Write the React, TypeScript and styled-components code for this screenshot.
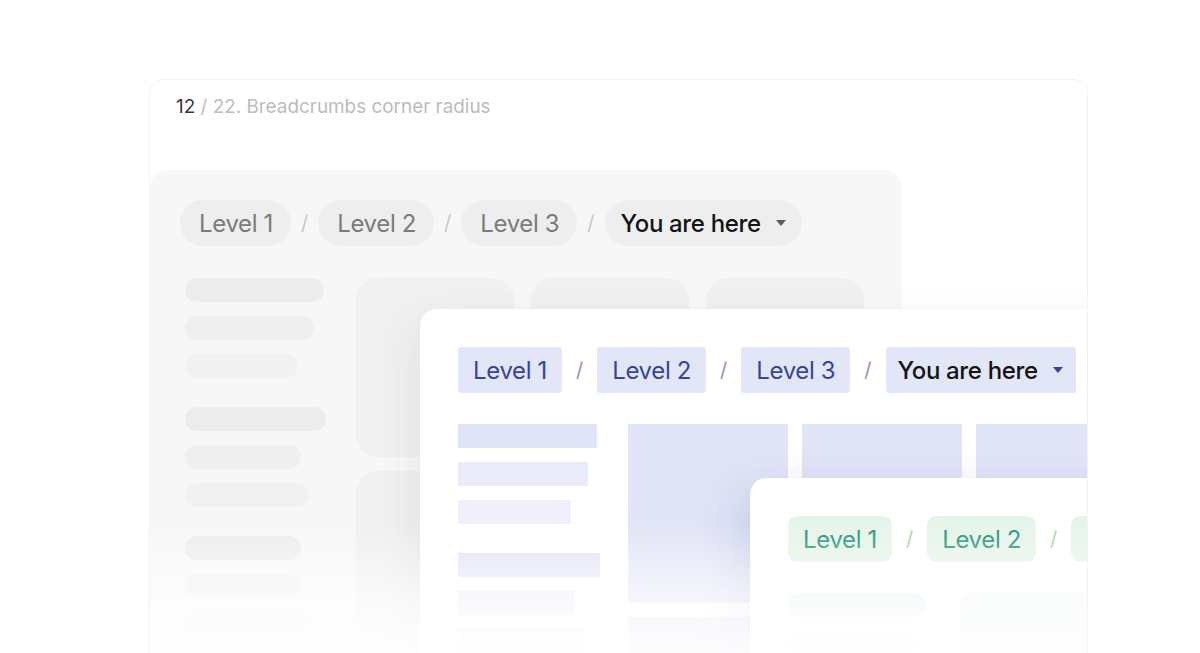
import React from "react";
import styled, { createGlobalStyle } from "styled-components";

type Tone = "grey" | "blue" | "green";

interface ToneStyle {
  crumbBg: string;
  crumbText: string;
  slash: string;
  current: string;
  caret: string;
  crumbRadius: number;
  crumbPad: number;
  slashGap: number;
  bars: string[];
  barRadius: number;
  block: string;
  blockRadius: number;
  blockW: number;
  colGap: number;
}

const tones: Record<Tone, ToneStyle> = {
  grey: {
    crumbBg: "#eeeeee",
    crumbText: "#7b7b7b",
    slash: "#c6c6c6",
    current: "#141414",
    caret: "#5e5e5e",
    crumbRadius: 23,
    crumbPad: 18,
    slashGap: 10,
    bars: ["#ececec", "#efefef", "#f1f1f1"],
    barRadius: 12,
    block: "#f0f0f0",
    blockRadius: 22,
    blockW: 158,
    colGap: 30,
  },
  blue: {
    crumbBg: "#e3e6f7",
    crumbText: "#36449a",
    slash: "#8a93cc",
    current: "#141414",
    caret: "#36449a",
    crumbRadius: 3,
    crumbPad: 15,
    slashGap: 14,
    bars: ["#e1e4f6", "#e9ebf9", "#eff0fb"],
    barRadius: 0,
    block: "#e2e5f7",
    blockRadius: 0,
    blockW: 160,
    colGap: 29,
  },
  green: {
    crumbBg: "#e5f4e9",
    crumbText: "#23937a",
    slash: "#9dd4a6",
    current: "#141414",
    caret: "#23937a",
    crumbRadius: 9,
    crumbPad: 15,
    slashGap: 14,
    bars: ["#e8f5eb", "#eef8f0", "#f2faf4"],
    barRadius: 12,
    block: "#edf7ef",
    blockRadius: 12,
    blockW: 160,
    colGap: 31,
  },
};

const GlobalStyle = createGlobalStyle`
  html, body {
    margin: 0;
    height: 653px;
    overflow: hidden;
    background: #ffffff;
    font-family: Inter, "Noto Sans", "Liberation Sans", sans-serif;
  }
`;

const Page = styled.div`
  padding: 80px 0 0 150px;
`;

const Card = styled.section`
  position: relative;
  width: 937px;
  height: 573px;
  border-radius: 14px 14px 0 0;
  background: #ffffff;
  box-shadow: 0 0 0 1px #f3f3f3, 0 2px 10px rgba(0, 0, 0, 0.015);
  overflow: hidden;
`;

const Header = styled.header`
  height: 90px;
  box-sizing: border-box;
  padding: 15px 0 0 26px;
  font-size: 18.9px;
  line-height: 24px;
  color: #bcbcbc;
`;

const Count = styled.span`
  color: #383838;
`;

const Stage = styled.div`
  position: relative;
  height: 483px;
`;

const Fade = styled.div`
  position: absolute;
  left: 0;
  right: 0;
  bottom: 0;
  height: 130px;
  background: linear-gradient(
    to bottom,
    rgba(255, 255, 255, 0) 0%,
    rgba(255, 255, 255, 0.7) 60%,
    rgba(255, 255, 255, 0.92) 100%
  );
  pointer-events: none;
  z-index: 5;
`;

const Window = styled.div<{ $tone: Tone; $left: number; $top: number; $width: number; $z: number }>`
  position: absolute;
  left: ${({ $left }) => $left}px;
  top: ${({ $top }) => $top}px;
  width: ${({ $width }) => $width}px;
  height: 560px;
  box-sizing: border-box;
  z-index: ${({ $z }) => $z};
  border-radius: ${({ $tone }) => ($tone === "grey" ? 18 : 16)}px;
  padding: ${({ $tone }) => ($tone === "grey" ? "30px 39px 0 30px" : "38px 0 0 38px")};
  background: ${({ $tone }) => ($tone === "grey" ? "#f7f7f7" : "#ffffff")};
  box-shadow: ${({ $tone }) =>
    $tone === "grey"
      ? "none"
      : $tone === "blue"
      ? "0 0 1px rgba(60, 70, 140, 0.1), -6px 14px 40px rgba(40, 50, 110, 0.07)"
      : "0 0 1px rgba(60, 90, 110, 0.1), -14px 10px 44px rgba(60, 70, 150, 0.14)"};
`;

const Trail = styled.nav`
  display: flex;
  align-items: center;
  height: 46px;
  white-space: nowrap;
`;

const Crumb = styled.span<{ $tone: Tone; $current?: boolean }>`
  display: inline-flex;
  align-items: center;
  height: 46px;
  flex: none;
  box-sizing: border-box;
  padding: 0 ${({ $tone, $current }) => tones[$tone].crumbPad - ($current ? 2 : 0)}px 0
    ${({ $tone, $current }) => tones[$tone].crumbPad + ($tone === "grey" ? 1 : 0) - ($current ? 3 : 0)}px;
  border-radius: ${({ $tone }) => tones[$tone].crumbRadius}px;
  background: ${({ $tone }) => tones[$tone].crumbBg};
  color: ${({ $tone, $current }) => ($current ? tones[$tone].current : tones[$tone].crumbText)};
  font-size: 24px;
  font-weight: ${({ $current }) => ($current ? 500 : 400)};
  letter-spacing: -0.35px;
`;

const Slash = styled.span<{ $tone: Tone }>`
  margin: 0 ${({ $tone }) => tones[$tone].slashGap}px;
  color: ${({ $tone }) => tones[$tone].slash};
  font-size: 20px;
`;

const Caret = styled.svg<{ $tone: Tone }>`
  width: 10px;
  height: 6px;
  margin-left: 15px;
  fill: ${({ $tone }) => tones[$tone].caret};
`;

const Body = styled.div<{ $tone: Tone }>`
  display: flex;
  align-items: flex-start;
  gap: ${({ $tone }) => tones[$tone].colGap}px;
  margin-top: ${({ $tone }) => ($tone === "grey" ? 32 : 31)}px;
  padding-left: ${({ $tone }) => ($tone === "grey" ? 5 : 0)}px;
`;

const Column = styled.div`
  display: flex;
  flex-direction: column;
  gap: 29px;
  flex: none;
  width: 141px;
`;

const Group = styled.div`
  display: flex;
  flex-direction: column;
  gap: 14px;
`;

const Bar = styled.div<{ $tone: Tone; $shade: number }>`
  height: 24px;
  border-radius: ${({ $tone }) => tones[$tone].barRadius}px;
  background: ${({ $tone, $shade }) => tones[$tone].bars[$shade]};
`;

const Blocks = styled.div<{ $tone: Tone }>`
  display: grid;
  grid-template-columns: repeat(3, ${({ $tone }) => tones[$tone].blockW}px);
  grid-auto-rows: 179px;
  gap: 14px ${({ $tone }) => ($tone === "grey" ? 17 : 14)}px;
  flex: none;
`;

const Block = styled.div<{ $tone: Tone }>`
  border-radius: ${({ $tone }) => tones[$tone].blockRadius}px;
  background: ${({ $tone }) => tones[$tone].block};
`;

const barWidths: Record<Tone, number[][]> = {
  grey: [
    [139, 129, 113],
    [141, 116, 124],
    [116, 116, 124],
  ],
  blue: [
    [139, 130, 113],
    [142, 117, 125],
  ],
  green: [[138, 128, 120]],
};

const levels = ["Level 1", "Level 2", "Level 3"];

function Breadcrumbs({ tone }: { tone: Tone }) {
  return (
    <Trail>
      {levels.map((label) => (
        <React.Fragment key={label}>
          <Crumb $tone={tone}>{label}</Crumb>
          <Slash $tone={tone}>/</Slash>
        </React.Fragment>
      ))}
      <Crumb $tone={tone} $current>
        You are here
        <Caret $tone={tone} viewBox="0 0 10 6">
          <polygon points="0,0 10,0 5,6" />
        </Caret>
      </Crumb>
    </Trail>
  );
}

function Layout({ tone }: { tone: Tone }) {
  return (
    <Body $tone={tone}>
      <Column>
        {barWidths[tone].map((group, gi) => (
          <Group key={gi}>
            {group.map((w, i) => (
              <Bar key={i} $tone={tone} $shade={i} style={{ width: w }} />
            ))}
          </Group>
        ))}
      </Column>
      <Blocks $tone={tone}>
        {Array.from({ length: 6 }).map((_, i) => (
          <Block key={i} $tone={tone} />
        ))}
      </Blocks>
    </Body>
  );
}

export default function App() {
  return (
    <>
      <GlobalStyle />
      <Page>
        <Card>
          <Header>
            <Count>12</Count> / 22. Breadcrumbs corner radius
          </Header>
          <Stage>
            <Window $tone="grey" $left={0} $top={0} $width={752} $z={1}>
              <Breadcrumbs tone="grey" />
              <Layout tone="grey" />
            </Window>
            <Window $tone="blue" $left={270} $top={139} $width={760} $z={2}>
              <Breadcrumbs tone="blue" />
              <Layout tone="blue" />
            </Window>
            <Window $tone="green" $left={600} $top={308} $width={600} $z={3}>
              <Breadcrumbs tone="green" />
              <Layout tone="green" />
            </Window>
            <Fade />
          </Stage>
        </Card>
      </Page>
    </>
  );
}
